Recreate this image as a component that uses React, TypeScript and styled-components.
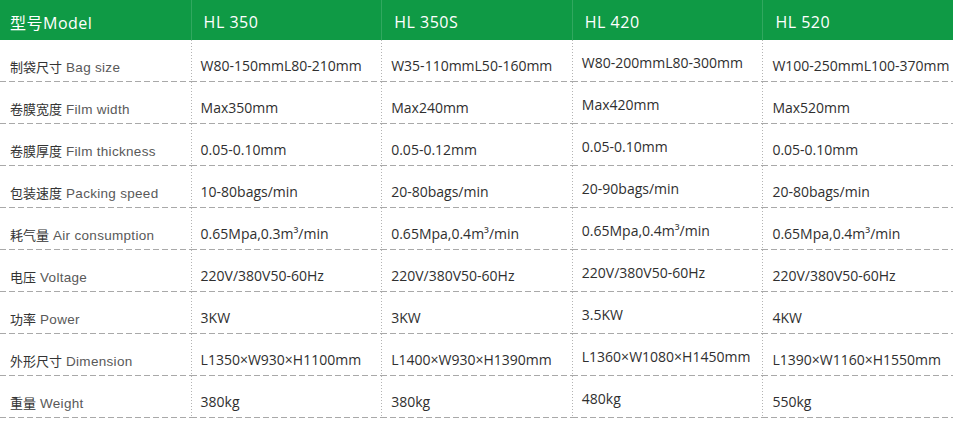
import React from "react";
import styled, { createGlobalStyle } from "styled-components";

const Global = createGlobalStyle`
  html, body { margin: 0; padding: 0; background: #ffffff; }
  body { font-family: "Open Sans", "Noto Sans CJK SC", sans-serif; }
`;

const Table = styled.div`
  width: 953px;
  display: grid;
  grid-template-columns: repeat(5, 1fr);
`;

const HeadCell = styled.div<{ $first?: boolean }>`
  height: 40px;
  box-sizing: border-box;
  background-color: #0f9a45;
  color: #ffffff;
  display: flex;
  align-items: center;
  padding: 4px 0 0 ${(p) => (p.$first ? 10 : 13)}px;
  font-family: "Open Sans", "Noto Sans CJK SC", sans-serif;
  font-size: 16px;
  letter-spacing: 0.5px;
  ${(p) =>
    p.$first ? "" : "box-shadow: inset 1px 0 0 rgba(255,255,255,0.14);"}
`;

const Cell = styled.div<{ $first?: boolean; $raise?: boolean }>`
  height: 42px;
  box-sizing: border-box;
  display: flex;
  align-items: center;
  padding: ${(p) => (p.$first ? 12 : p.$raise ? 3 : 8)}px 0 0
    ${(p) => (p.$first ? 10 : 10)}px;
  color: #2f2f2f;
  font-family: "Open Sans", "Noto Sans CJK SC", sans-serif;
  font-size: 14px;
  white-space: nowrap;
  background-image: linear-gradient(to right, #a9a9a9 62%, transparent 0)
    ${(p) =>
      p.$first
        ? ""
        : ", linear-gradient(to bottom, #b4b4b4 50%, transparent 0)"};
  background-size: 9px 1px ${(p) => (p.$first ? "" : ", 1px 3px")};
  background-repeat: repeat-x ${(p) => (p.$first ? "" : ", repeat-y")};
  background-position: left bottom ${(p) => (p.$first ? "" : ", left top")};
`;

const Label = styled.span`
  display: inline-block;
  line-height: 20px;
`;

const LabelCn = styled.span`
  font-family: "Noto Sans CJK SC", sans-serif;
  font-size: 13px;
  color: #333333;
`;

const LabelEn = styled.span`
  font-family: "Liberation Sans", Arial, sans-serif;
  font-size: 13.5px;
  letter-spacing: 0.3px;
  color: #595959;
  margin-left: 4px;
`;

const models = ["HL 350", "HL 350S", "HL 420", "HL 520"];

const rows: { cn: string; en: string; values: string[] }[] = [
  { cn: "制袋尺寸", en: "Bag size", values: ["W80-150mmL80-210mm", "W35-110mmL50-160mm", "W80-200mmL80-300mm", "W100-250mmL100-370mm"] },
  { cn: "卷膜宽度", en: "Film width", values: ["Max350mm", "Max240mm", "Max420mm", "Max520mm"] },
  { cn: "卷膜厚度", en: "Film thickness", values: ["0.05-0.10mm", "0.05-0.12mm", "0.05-0.10mm", "0.05-0.10mm"] },
  { cn: "包装速度", en: "Packing speed", values: ["10-80bags/min", "20-80bags/min", "20-90bags/min", "20-80bags/min"] },
  { cn: "耗气量", en: "Air consumption", values: ["0.65Mpa,0.3m³/min", "0.65Mpa,0.4m³/min", "0.65Mpa,0.4m³/min", "0.65Mpa,0.4m³/min"] },
  { cn: "电压", en: "Voltage", values: ["220V/380V50-60Hz", "220V/380V50-60Hz", "220V/380V50-60Hz", "220V/380V50-60Hz"] },
  { cn: "功率", en: "Power", values: ["3KW", "3KW", "3.5KW", "4KW"] },
  { cn: "外形尺寸", en: "Dimension", values: ["L1350×W930×H1100mm", "L1400×W930×H1390mm", "L1360×W1080×H1450mm", "L1390×W1160×H1550mm"] },
  { cn: "重量", en: "Weight", values: ["380kg", "380kg", "480kg", "550kg"] },
];

export default function App() {
  return (
    <>
      <Global />
      <Table>
        <HeadCell $first>型号Model</HeadCell>
        {models.map((m) => (
          <HeadCell key={m}>{m}</HeadCell>
        ))}
        {rows.map((r) => (
          <React.Fragment key={r.en}>
            <Cell $first>
              <Label>
                <LabelCn>{r.cn}</LabelCn>
                <LabelEn>{r.en}</LabelEn>
              </Label>
            </Cell>
            {r.values.map((v, i) => (
              <Cell key={i} $raise={i === 2}>
                {v}
              </Cell>
            ))}
          </React.Fragment>
        ))}
      </Table>
    </>
  );
}
